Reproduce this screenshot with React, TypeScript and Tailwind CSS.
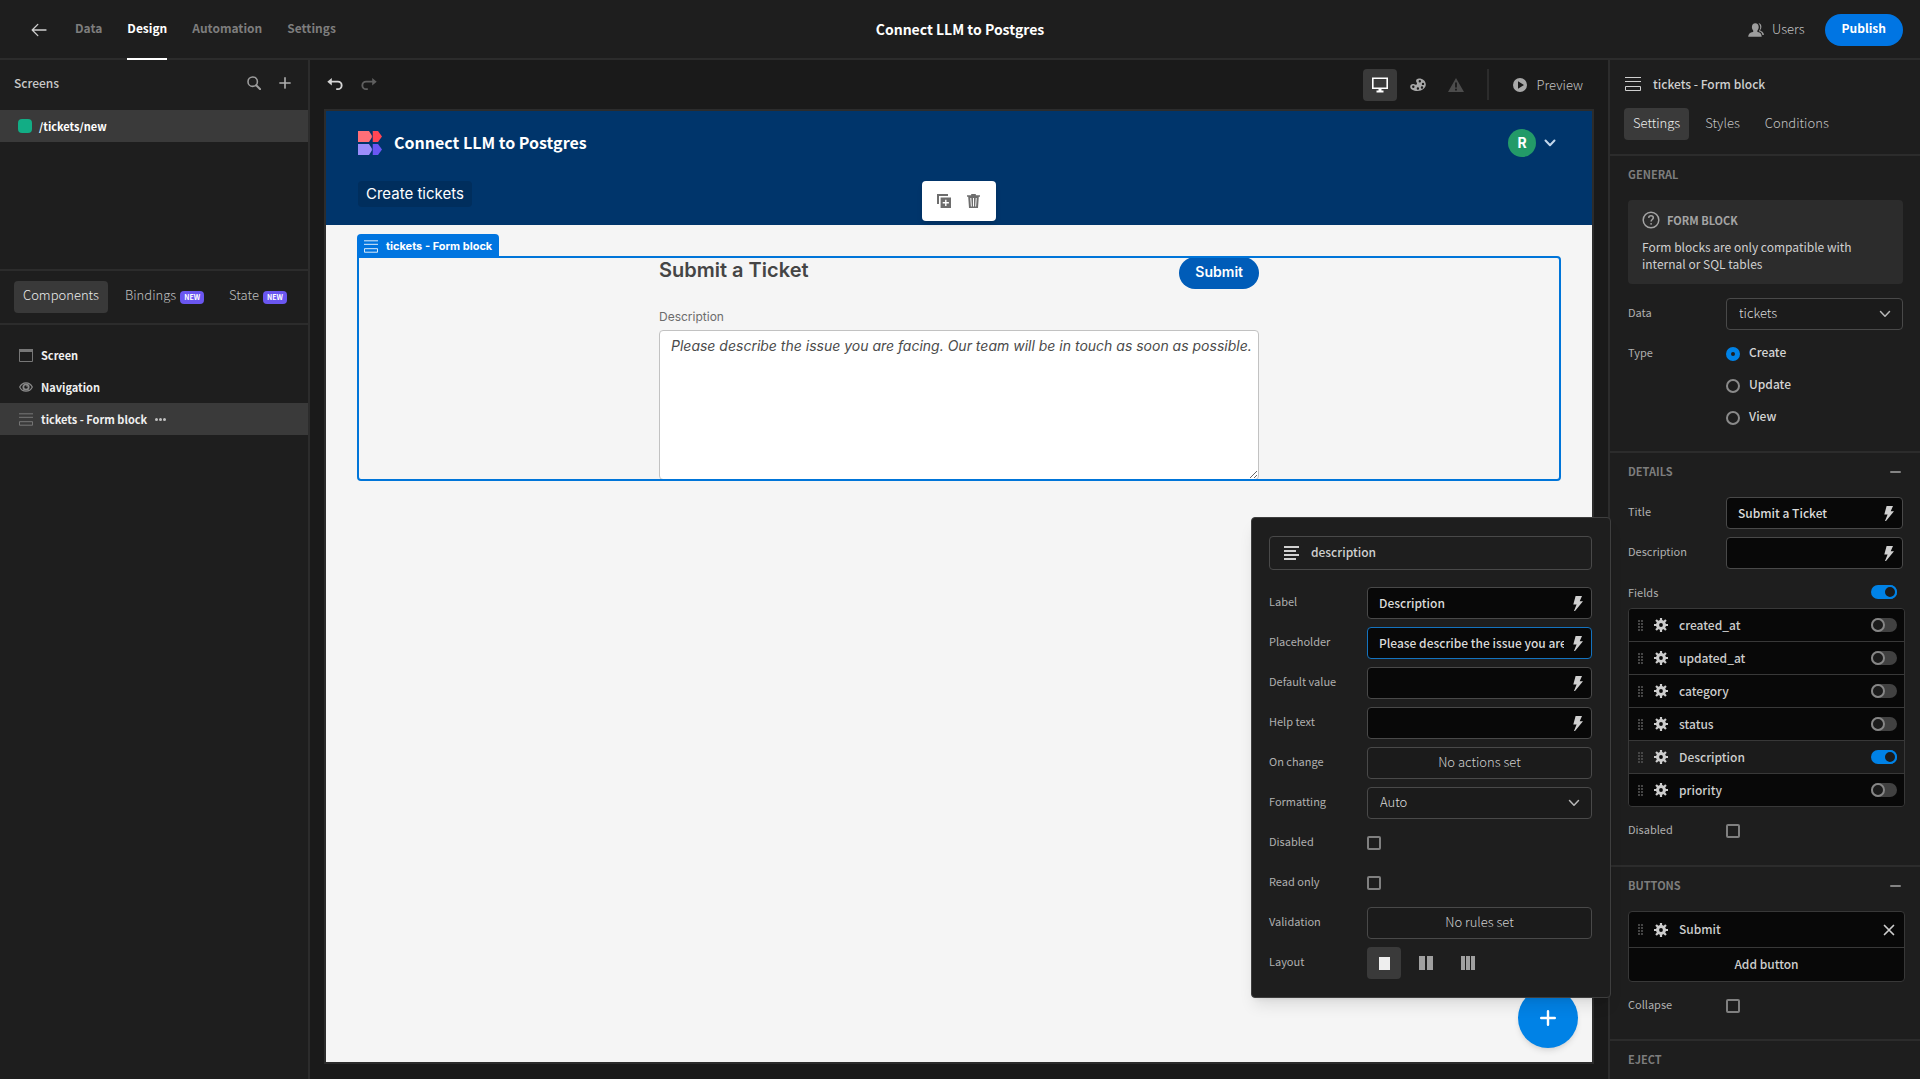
import React from "react";

type IconProps = { className?: string };

const BackIcon = ({ className }: IconProps) => (
  <svg viewBox="0 0 16 14" className={className} fill="none" stroke="currentColor" strokeWidth="1.3" strokeLinecap="round" strokeLinejoin="round">
    <path d="M15 7H1.200M6.800 1.400 1.200 7l5.600 5.600" />
  </svg>
);

const SearchIcon = ({ className }: IconProps) => (
  <svg viewBox="0 0 14 14" className={className} fill="none" stroke="currentColor" strokeWidth="1.6" strokeLinecap="round">
    <circle cx="5.7" cy="5.7" r="4.7" />
    <path d="m9.200 9.200 4 4" strokeWidth="2" />
  </svg>
);

const PlusIcon = ({ className }: IconProps) => (
  <svg viewBox="0 0 12 12" className={className} fill="none" stroke="currentColor" strokeLinecap="round">
    <path d="M6 .9v10.200M.9 6h10.200" />
  </svg>
);

const FormIcon = ({ className }: IconProps) => (
  <svg viewBox="0 0 16 14" className={className} fill="none" stroke="currentColor" strokeWidth="1">
    <path d="M0 .5h16M0 4.500h16" />
    <path d="M.5 9.500h15v4H.5z" />
  </svg>
);

const ScreenIcon = ({ className }: IconProps) => (
  <svg viewBox="0 0 14 13" className={className}>
    <path d="M.5.5h13v12H.5z" fill="none" stroke="currentColor" />
    <path d="M0 0h14v3H0z" fill="currentColor" />
  </svg>
);

const EyeIcon = ({ className }: IconProps) => (
  <svg viewBox="0 0 14 10" className={className} fill="none" stroke="currentColor">
    <path d="M.7 5C2 2.300 4.300.8 7 .8S12 2.300 13.300 5C12 7.700 9.700 9.200 7 9.200S2 7.700.7 5z" strokeWidth="1.200" />
    <circle cx="7" cy="5" r="2.700" strokeWidth="1.800" />
    <circle cx="8" cy="4" r=".8" fill="currentColor" stroke="none" />
  </svg>
);

const UndoIcon = ({ className }: IconProps) => (
  <svg viewBox="0 0 16 13" className={className}>
    <path d="M4.800 0v2.700h6.100a4.700 4.700 0 0 1 0 9.400H9.200v-1.900h1.700a2.800 2.800 0 0 0 0-5.600H4.800v3L.3 3.800z" fill="currentColor" />
  </svg>
);

const DesktopIcon = ({ className }: IconProps) => (
  <svg viewBox="0 0 16 16" className={className}>
    <path d="M.8 1.300h14.400v9.900H.8z" fill="none" stroke="currentColor" strokeWidth="1.600" />
    <path d="M6.500 11h3v2.500h2V15.500h-7v-2h2z" fill="currentColor" />
  </svg>
);

const PaletteIcon = ({ className }: IconProps) => (
  <svg viewBox="0 0 16 14" className={className}>
    <path
      fillRule="evenodd"
      fill="currentColor"
      d="M9 .6c3.900 0 6.800 2.600 6.800 6 0 3.600-3.700 6.400-8.200 6.400C3.300 13 .2 11.200.2 8.700c0-1.500 1.200-2.600 2.700-2.600 1.300 0 1.800.6 2.700.6.900 0 1.400-.5 1.400-1.300 0-.9-.9-1.300-.9-2.500C6.100 1.500 7.300.6 9 .6zM9.800 2a1.200 1.200 0 1 0 0 2.400 1.200 1.200 0 0 0 0-2.400zM13 4.700a1.200 1.200 0 1 0 0 2.400 1.200 1.200 0 0 0 0-2.400zM12 8.300a1.200 1.200 0 1 0 0 2.400 1.200 1.200 0 0 0 0-2.400zM7.900 9.300a1.200 1.200 0 1 0 0 2.400 1.200 1.200 0 0 0 0-2.400zM3.300 7.600a1.200 1.200 0 1 0 0 2.400 1.200 1.200 0 0 0 0-2.400z"
    />
  </svg>
);

const WarningIcon = ({ className }: IconProps) => (
  <svg viewBox="0 0 16 14" className={className}>
    <path fillRule="evenodd" fill="currentColor" d="M8 0l8 14H0zM7.100 4.500v5h1.800v-5zM7.100 10.700v1.700h1.800v-1.700z" />
  </svg>
);

const PlayIcon = ({ className }: IconProps) => (
  <svg viewBox="0 0 14 14" className={className}>
    <path fillRule="evenodd" fill="currentColor" d="M7 0a7 7 0 1 1 0 14A7 7 0 0 1 7 0zM5 3.200v7.600L11 7z" />
  </svg>
);

const UsersIcon = ({ className }: IconProps) => (
  <svg viewBox="0 0 16 14" className={className} fill="currentColor">
    <path d="M9.700 9c-.3-.1-.4-.4-.4-.8 0-.3.100-.6.300-.9.700-.8 1.100-2 1.100-3.200C10.700 1.700 9.400.3 7.300.3S3.900 1.700 3.900 4.100c0 1.200.4 2.400 1.100 3.200.2.300.3.600.3.900 0 .4-.1.700-.4.800C2 9.500.2 11 .2 13.700h13.500C13.700 11 12.400 9.500 9.700 9z" />
    <path d="M10.400.2c2 .2 3 1.600 3 3.600 0 1-.3 2-.9 2.700-.3.400-.3 1.200.2 1.500 2 .6 3.100 1.800 3.200 3.900h-1.500c-.4-1.900-1.500-3-3.500-3.600.9-1.300 1.300-2.700 1.300-4.100 0-1.800-.7-3.100-1.800-4z" />
  </svg>
);

const DuplicateIcon = ({ className }: IconProps) => (
  <svg viewBox="0 0 14 14" className={className}>
    <path d="M0 0h11v2H2v8H0z" fill="currentColor" />
    <path fillRule="evenodd" fill="currentColor" d="M3.600 3.600H14V14H3.600zM8.100 5.700v2.400H5.700v1.400h2.400v2.400h1.400V9.500h2.400V8.100H9.500V5.700z" />
  </svg>
);

const TrashIcon = ({ className }: IconProps) => (
  <svg viewBox="0 0 13 14" className={className}>
    <path fillRule="evenodd" fill="currentColor" d="M4.200 0h4.600v1.200H13v1.600h-1.200L11 14H2L1.200 2.800H0V1.200h4.200zM3.300 4l.6 8.500h.9L4.300 4zM6 4v8.500h1V4zM8.700 4l-.5 8.500h.9L9.700 4z" />
  </svg>
);

const BoltIcon = ({ className }: IconProps) => (
  <svg viewBox="0 0 10 15" className={className}>
    <path d="M2.600 0H9L6.700 5.200H10L2 15H1l2.600-6.500H.3z" fill="currentColor" />
  </svg>
);

const ChevronIcon = ({ className }: IconProps) => (
  <svg viewBox="0 0 12 8" className={className} fill="none" stroke="currentColor" strokeLinecap="round" strokeLinejoin="round">
    <path d="m1.500 1.500 4.500 4.700 4.500-4.700" />
  </svg>
);

const GearIcon = ({ className }: IconProps) => (
  <svg viewBox="0 0 14 14" className={className}>
    <g fill="currentColor">
      <path d="M5.900 0h2.200v14H5.900z" />
      <path d="M5.900 0h2.200v14H5.900z" transform="rotate(45 7 7)" />
      <path d="M5.900 0h2.200v14H5.900z" transform="rotate(90 7 7)" />
      <path d="M5.900 0h2.200v14H5.900z" transform="rotate(135 7 7)" />
      <circle cx="7" cy="7" r="5" />
    </g>
    <circle cx="7" cy="7" r="1.900" fill="#0a0a0a" />
  </svg>
);

const DragIcon = ({ className }: IconProps) => (
  <svg viewBox="0 0 5 11" className={className} fill="currentColor">
    {[0, 3, 6, 9].map((y) => (
      <React.Fragment key={y}>
        <rect x="0" y={y} width="2" height="2" />
        <rect x="3" y={y} width="2" height="2" />
      </React.Fragment>
    ))}
  </svg>
);

const CloseIcon = ({ className }: IconProps) => (
  <svg viewBox="0 0 12 12" className={className} fill="none" stroke="currentColor" strokeWidth="1.700" strokeLinecap="round">
    <path d="m1.500 1.500 9 9M10.500 1.500l-9 9" />
  </svg>
);

const TextAlignIcon = ({ className }: IconProps) => (
  <svg viewBox="0 0 15 14" className={className} fill="currentColor">
    <path d="M0 0h15v2H0zM0 4h12v2H0zM0 8h15v2H0zM0 12h12v2H0z" />
  </svg>
);

const HelpIcon = ({ className }: IconProps) => (
  <svg viewBox="0 0 18 18" className={className} fill="none" stroke="currentColor" strokeWidth="1.500">
    <circle cx="9" cy="9" r="7.800" />
    <path d="M6.700 6.900C6.800 5.500 7.700 4.800 9 4.800s2.300.8 2.300 2c0 1.700-2.200 1.800-2.200 3.700" />
    <circle cx="9.100" cy="12.800" r=".9" fill="currentColor" stroke="none" />
  </svg>
);

const Logo = ({ className }: IconProps) => (
  <svg viewBox="0 0 24 24" className={className}>
    <path d="M0 0h11l3.500 5.500L11 11H0z" fill="#ff6f78" />
    <path d="M14.500 0H20l4 5.500-4 5.500h-5.500z" fill="#ff4654" />
    <path d="M0 13h11l3.500 5.500L11 24H0z" fill="#9b8dfb" />
    <path d="M14.500 13H20l4 5.500-4 5.500h-5.500z" fill="#6a56f3" />
    <path d="M14.300 0v11M14.300 13v11" stroke="#00356b" strokeWidth=".6" />
  </svg>
);

function NewBadge() {
  return <span className="rounded-sm bg-[#6a56f0] px-1 text-[7px] leading-[13px] font-bold text-white">NEW</span>;
}

function BoundInput({ id, value, focused }: { id: string; value: string; focused?: boolean }) {
  return (
    <div className={`flex h-8 min-w-0 flex-1 items-center rounded border bg-[#080808] ${focused ? "border-[#1473bf]" : "border-[#494949]"}`}>
      <input id={id} type="text" defaultValue={value} className="h-full min-w-0 flex-1 bg-transparent pb-0.5 pl-[11px] text-xs leading-4 font-medium text-[#dadada] outline-none" />
      <button type="button" aria-label="Bind value" className="flex w-[27px] shrink-0 justify-center text-[#d0d0d0]">
        <BoltIcon className="h-[15px] w-[10px]" />
      </button>
    </div>
  );
}

function Picker({ id, value }: { id: string; value: string }) {
  return (
    <div className="relative h-8 min-w-0 flex-1">
      <select id={id} defaultValue={value} className="h-full w-full appearance-none rounded border border-[#494949] bg-[#1b1b1b] pb-0.5 pl-3 text-[13px] leading-4 font-light text-[#dcdcdc] outline-none">
        <option>{value}</option>
      </select>
      <ChevronIcon className="pointer-events-none absolute top-3 right-3 h-2 w-3 stroke-[1.5] text-[#b8b8b8]" />
    </div>
  );
}

function Checkbox({ id }: { id: string }) {
  return <input id={id} type="checkbox" className="h-[14px] w-[14px] shrink-0 appearance-none rounded-[2px] border-2 border-[#808080] bg-transparent checked:bg-[#0082e6]" />;
}

function Switch({ label, on }: { label: string; on?: boolean }) {
  return (
    <label className="relative block h-[14px] w-[26px] shrink-0">
      <input type="checkbox" role="switch" aria-label={label} defaultChecked={on} className="peer absolute inset-0 h-full w-full appearance-none rounded-full bg-[#414141] checked:bg-[#0082e6]" />
      <span className="pointer-events-none absolute top-0 left-0 h-[14px] w-[14px] rounded-full border-2 border-[#868686] bg-[#1b1b1b] peer-checked:left-3 peer-checked:border-[#0082e6]" />
    </label>
  );
}

function Row({ label, htmlFor, children }: { label: string; htmlFor?: string; children: React.ReactNode }) {
  return (
    <div className="flex min-h-8 items-center">
      <label htmlFor={htmlFor} className="w-[98px] shrink-0 pb-1 text-[11px] leading-4 text-[#b0b0b0]">
        {label}
      </label>
      {children}
    </div>
  );
}

function SectionHeader({ title, collapsible }: { title: string; collapsible?: boolean }) {
  return (
    <div className="flex h-[38px] items-center justify-between pr-1">
      <h2 className="pb-0.5 text-[11px] leading-4 font-bold text-[#7d7d7d]">{title}</h2>
      {collapsible && (
        <button type="button" aria-label={`Collapse ${title}`} className="flex h-4 w-[11px] items-center">
          <span className="h-[2px] w-full rounded-full bg-[#848484]" />
        </button>
      )}
    </div>
  );
}

function TopBar() {
  const tabs = ["Data", "Design", "Automation", "Settings"];
  return (
    <header className="grid h-[60px] shrink-0 grid-cols-[1fr_auto_1fr] border-b-2 border-[#2c2c2c] bg-[#1e1e1e]">
      <div className="flex items-center pl-[31px]">
        <button type="button" aria-label="Back" className="mr-7 text-[#cfcfcf]">
          <BackIcon className="h-[14px] w-4" />
        </button>
        <nav className="flex h-[60px] gap-[25px] self-start">
          {tabs.map((t) => (
            <a key={t} href="#" className={`flex h-[60px] items-center border-b-2 pb-0.5 text-xs leading-4 font-bold ${t === "Design" ? "border-white text-white" : "border-transparent text-[#7d7d7d]"}`}>
              {t}
            </a>
          ))}
        </nav>
      </div>
      <h1 className="self-center pb-0.5 text-sm leading-5 font-bold text-white">Connect LLM to Postgres</h1>
      <div className="flex items-center justify-end pr-[17px]">
        <button type="button" className="mr-5 flex items-center gap-2 text-[13px] leading-4 font-light text-[#c4c4c4]">
          <UsersIcon className="h-[14px] w-4 text-[#9d9d9d]" />
          <span className="pb-0.5">Users</span>
        </button>
        <button type="button" className="h-8 rounded-full bg-[#0075e3] px-[17px] pb-1 text-xs leading-4 font-bold text-white">
          Publish
        </button>
      </div>
    </header>
  );
}

function LeftPanel() {
  return (
    <aside className="flex w-[310px] shrink-0 flex-col border-r-2 border-[#2c2c2c] bg-[#1e1e1e]">
      <section className="h-[211px] border-b-2 border-[#2c2c2c]">
        <div className="flex h-[50px] items-center pr-[17px] pl-[14px]">
          <h2 className="flex-1 pb-1 text-xs leading-4 font-medium text-[#c8c8c8]">Screens</h2>
          <button type="button" aria-label="Search screens" className="mr-[18px] pb-1 text-[#9c9c9c]">
            <SearchIcon className="h-[14px] w-[14px]" />
          </button>
          <button type="button" aria-label="Add screen" className="pb-1 text-[#b0b0b0]">
            <PlusIcon className="h-3 w-3 stroke-[1.6]" />
          </button>
        </div>
        <a href="#" className="flex h-8 items-center gap-[7px] bg-[#3a3a3a] pl-[18px] text-[11px] leading-4 font-bold text-white">
          <span className="h-[14px] w-[14px] rounded-[4px] bg-[#12ad85]" />
          /tickets/new
        </a>
      </section>
      <div className="flex h-[54px] items-center border-b-2 border-[#2c2c2c] pl-[14px] text-[13px] leading-4 font-light text-[#c0c0c0]">
        <button type="button" className="mr-[17px] h-8 rounded bg-[#393939] px-[9px] pb-1 text-[#ececec]">Components</button>
        <button type="button" className="mr-[25px] flex h-8 items-center gap-1">
          <span className="pb-1">Bindings</span> <NewBadge />
        </button>
        <button type="button" className="flex h-8 items-center gap-1">
          <span className="pb-1">State</span> <NewBadge />
        </button>
      </div>
      <ul className="pt-[14px] text-[11px] leading-4 font-bold text-[#f0f0f0]">
        <li className="flex h-8 items-center gap-2 pl-[19px]">
          <ScreenIcon className="h-[13px] w-[14px] text-[#777]" />
          Screen
        </li>
        <li className="flex h-8 items-center gap-2 pl-[19px]">
          <EyeIcon className="h-[10px] w-[14px] text-[#8a8a8a]" />
          Navigation
        </li>
        <li className="flex h-8 items-center gap-2 bg-[#3a3a3a] pl-[19px]">
          <FormIcon className="h-[13px] w-[14px] text-[#808080]" />
          tickets - Form block
          <button type="button" aria-label="More" className="flex gap-px">
            <span className="h-[3px] w-[3px] rounded-full bg-[#c0c0c0]" />
            <span className="h-[3px] w-[3px] rounded-full bg-[#c0c0c0]" />
            <span className="h-[3px] w-[3px] rounded-full bg-[#c0c0c0]" />
          </button>
        </li>
      </ul>
    </aside>
  );
}

function Toolbar() {
  return (
    <div className="flex h-[49px] shrink-0 items-center pr-[11px] pl-[3px]">
      <button type="button" aria-label="Undo" className="text-[#d4d4d4]">
        <UndoIcon className="h-[13px] w-4" />
      </button>
      <button type="button" aria-label="Redo" className="ml-[18px] -scale-x-100 text-[#5f5f5f]">
        <UndoIcon className="h-[13px] w-4" />
      </button>
      <div className="ml-auto flex h-8 items-center">
        <button type="button" aria-label="Desktop" className="flex h-8 w-[34px] items-center justify-center rounded bg-[#3a3a3a] text-white">
          <DesktopIcon className="h-4 w-4" />
        </button>
        <button type="button" aria-label="Theme" className="ml-[13px] text-[#a8a8a8]">
          <PaletteIcon className="h-[14px] w-4" />
        </button>
        <button type="button" aria-label="Errors" className="ml-[22px] text-[#4c4c4c]">
          <WarningIcon className="h-[14px] w-4" />
        </button>
        <span className="mr-6 ml-[23px] h-[31px] w-[2px] bg-[#2c2c2c]" />
        <button type="button" className="flex items-center gap-[10px] text-[13px] leading-4 font-light text-[#c4c4c4]">
          <PlayIcon className="h-[14px] w-[14px] text-[#a8a8a8]" />
          Preview
        </button>
      </div>
    </div>
  );
}

function Canvas() {
  return (
    <div className="relative min-h-0 flex-1 border-2 border-[#2c2c2c] bg-[#f5f5f5] font-['Inter',sans-serif]">
      <header className="h-[114px] bg-[#00356b] px-8 pt-[18px] text-white">
        <div className="flex items-center">
          <Logo className="h-6 w-6" />
          <h2 className="ml-3 flex-1 pb-0.5 text-base leading-6 font-bold [font-family:'Noto_Sans_CJK_SC',sans-serif]">Connect LLM to Postgres</h2>
          <button type="button" aria-label="Account" className="flex items-center gap-2 pr-1">
            <span className="h-7 w-7 rounded-full bg-[#239a68] text-sm leading-7 font-bold">R</span>
            <ChevronIcon className="h-2 w-3 stroke-2 text-[#c3d7ec]" />
          </button>
        </div>
        <a href="#" className="mt-6 inline-block rounded bg-[#002e5d] px-2 text-[15px] leading-[26px]">
          Create tickets
        </a>
      </header>
      <div className="absolute top-[70px] left-1/2 flex h-10 w-[74px] -translate-x-1/2 items-center gap-4 rounded bg-white pl-[15px] text-[#6d6d6d] shadow-md">
        <button type="button" aria-label="Duplicate">
          <DuplicateIcon className="h-[14px] w-[14px]" />
        </button>
        <button type="button" aria-label="Delete">
          <TrashIcon className="h-[14px] w-[13px]" />
        </button>
      </div>
      <div className="relative mx-[31px] mt-[31px] h-[225px] pt-px">
        <form className="mx-auto max-w-[600px]">
          <div className="flex items-start justify-between">
            <h3 className="pt-px text-xl leading-6 font-semibold text-[#454545]">Submit a Ticket</h3>
            <button type="button" className="h-8 rounded-full bg-[#005cb8] px-4 pb-0.5 text-sm leading-5 font-semibold text-white">
              Submit
            </button>
          </div>
          <label htmlFor="ticket-description" className="mt-5 block text-xs leading-4 text-[#6c6c6c]">
            Description
          </label>
          <textarea
            id="ticket-description"
            placeholder="Please describe the issue you are facing. Our team will be in touch as soon as possible."
            className="mt-[5px] block h-[150px] w-full rounded border border-[#c2c2c2] bg-white py-[5px] pr-1 pl-[11px] text-sm leading-5 text-[#4b4b4b] italic placeholder:text-[#4b4b4b]"
          />
        </form>
        <div className="pointer-events-none absolute inset-0 rounded-b rounded-tr border-2 border-[#0075d9]" />
        <div className="absolute -top-[22px] left-0 flex h-6 items-center gap-2 rounded-t bg-[#0075e0] px-[7px] text-[11px] leading-4 font-bold text-white">
          <FormIcon className="h-[13px] w-[14px]" />
          tickets - Form block
        </div>
      </div>
      <button type="button" aria-label="Add component" className="absolute right-[14px] bottom-[14px] flex h-[60px] w-[60px] items-center justify-center rounded-full bg-[#0082e6] text-white shadow-md">
        <PlusIcon className="h-4 w-4 stroke-[1.8]" />
      </button>
    </div>
  );
}

function FieldPopover() {
  const boxButton = "h-8 min-w-0 flex-1 rounded border border-[#494949] bg-[#1b1b1b] pb-0.5 text-center text-[13px] leading-4 font-light text-[#d0d0d0]";
  return (
    <div role="dialog" aria-label="description" className="absolute top-[457px] -right-[3px] w-[360px] rounded border border-[#3e3e3e] bg-[#1e1e1e] py-[18px] pr-[18px] pl-[17px] shadow-lg">
      <div className="mb-[17px] flex h-[34px] items-center gap-3 rounded border border-[#494949] pl-[14px] text-xs leading-4 font-medium text-[#d0d0d0]">
        <TextAlignIcon className="h-[14px] w-[15px]" />
        <span className="pb-0.5">description</span>
      </div>
      <div className="flex flex-col gap-2">
        <Row label="Label" htmlFor="f-label"><BoundInput id="f-label" value="Description" /></Row>
        <Row label="Placeholder" htmlFor="f-ph">
          <BoundInput id="f-ph" value="Please describe the issue you are facing. Our team will be in touch as soon as possible." focused />
        </Row>
        <Row label="Default value" htmlFor="f-def"><BoundInput id="f-def" value="" /></Row>
        <Row label="Help text" htmlFor="f-help"><BoundInput id="f-help" value="" /></Row>
        <Row label="On change" htmlFor="f-change"><button id="f-change" type="button" className={boxButton}>No actions set</button></Row>
        <Row label="Formatting" htmlFor="f-fmt"><Picker id="f-fmt" value="Auto" /></Row>
        <Row label="Disabled" htmlFor="f-dis"><Checkbox id="f-dis" /></Row>
        <Row label="Read only" htmlFor="f-ro"><Checkbox id="f-ro" /></Row>
        <Row label="Validation" htmlFor="f-val"><button id="f-val" type="button" className={boxButton}>No rules set</button></Row>
        <Row label="Layout">
          <div className="flex gap-2">
            <button type="button" aria-label="One column" className="flex h-8 w-[34px] items-center justify-center rounded bg-[#3a3a3a]">
              <span className="h-[13px] w-[11px] bg-[#eeeeee]" />
            </button>
            <button type="button" aria-label="Two columns" className="flex h-8 w-[34px] items-center justify-center gap-[2px]">
              <span className="h-[14px] w-[6px] bg-[#a0a0a0]" />
              <span className="h-[14px] w-[6px] bg-[#a0a0a0]" />
            </button>
            <button type="button" aria-label="Three columns" className="flex h-8 w-[34px] items-center justify-center gap-px">
              <span className="h-[14px] w-1 bg-[#a0a0a0]" />
              <span className="h-[14px] w-1 bg-[#a0a0a0]" />
              <span className="h-[14px] w-1 bg-[#a0a0a0]" />
            </button>
          </div>
        </Row>
      </div>
    </div>
  );
}

const fields = [
  { name: "created_at", on: false },
  { name: "updated_at", on: false },
  { name: "category", on: false },
  { name: "status", on: false },
  { name: "Description", on: true },
  { name: "priority", on: false },
];

function RightPanel() {
  return (
    <aside className="w-[312px] shrink-0 overflow-hidden border-l-2 border-[#2c2c2c] bg-[#1e1e1e]">
      <div className="h-24 border-b-2 border-[#2c2c2c] pt-2 pl-[14px]">
        <div className="flex h-8 items-center gap-3 pl-px text-xs leading-4 font-medium text-[#cfcfcf]">
          <FormIcon className="h-[14px] w-4" />
          tickets - Form block
        </div>
        <div className="mt-2 flex text-[13px] leading-4 font-light text-[#c4c4c4]">
          <button type="button" className="h-8 rounded bg-[#3a3a3a] px-[9px] pb-0.5 text-[#efefef]">Settings</button>
          <button type="button" className="ml-[7px] h-8 px-[9px] pb-0.5">Styles</button>
          <button type="button" className="ml-[7px] h-8 px-[9px] pb-0.5">Conditions</button>
        </div>
      </div>
      <section className="border-b-2 border-[#2c2c2c] pr-[17px] pb-[17px] pl-[18px]">
        <SectionHeader title="GENERAL" />
        <div className="mt-[6px] mb-[14px] h-[84px] rounded bg-[#2c2c2c] pt-[11px] pr-6 pl-[14px]">
          <div className="flex items-center gap-[7px] text-[11px] leading-[18px] font-bold text-[#a4a4a4]">
            <HelpIcon className="h-[18px] w-[18px]" />
            FORM BLOCK
          </div>
          <p className="mt-[9px] text-xs leading-[17px] text-[#d0d0d0]">Form blocks are only compatible with internal or SQL tables</p>
        </div>
        <Row label="Data" htmlFor="s-data"><Picker id="s-data" value="tickets" /></Row>
        <fieldset className="mt-2 flex">
          <legend className="float-left h-8 w-[98px] text-[11px] leading-7 text-[#b0b0b0]">Type</legend>
          <div>
            {["Create", "Update", "View"].map((t) => (
              <label key={t} className="flex h-8 items-center gap-[9px] text-xs leading-4 font-medium text-[#d4d4d4]">
                <input type="radio" name="type" defaultChecked={t === "Create"} className="h-[14px] w-[14px] appearance-none rounded-full border-2 border-[#8a8a8a] checked:border-[5px] checked:border-[#0082e6]" />
                <span className="pb-1">{t}</span>
              </label>
            ))}
          </div>
        </fieldset>
      </section>
      <section className="border-b-2 border-[#2c2c2c] pr-[15px] pb-[18px] pl-[18px]">
        <SectionHeader title="DETAILS" collapsible />
        <div className="mt-[6px] flex flex-col gap-2 pr-0.5">
          <Row label="Title" htmlFor="s-title"><BoundInput id="s-title" value="Submit a Ticket" /></Row>
          <Row label="Description" htmlFor="s-desc"><BoundInput id="s-desc" value="" /></Row>
        </div>
        <div className="mt-2 flex h-[31px] items-center justify-between pr-2 pb-px text-[11px] leading-4 text-[#b0b0b0]">
          <span>Fields</span>
          <Switch label="All fields" on />
        </div>
        <ul className="mb-2 overflow-hidden rounded border border-[#383838]">
          {fields.map((f) => (
            <li key={f.name} className={`flex h-[33px] items-center border-b border-[#383838] pr-[7px] pl-[9px] last:h-8 last:border-b-0 ${f.on ? "bg-[#1b1b1b]" : "bg-[#080808]"}`}>
              <DragIcon className="h-[11px] w-[5px] text-[#454545]" />
              <button type="button" aria-label={`Configure ${f.name}`} className="ml-[11px] text-[#cdcdcd]">
                <GearIcon className="h-[14px] w-[14px]" />
              </button>
              <span className="ml-[11px] flex-1 text-xs leading-4 font-medium text-[#cdcdcd]">{f.name}</span>
              <Switch label={f.name} on={f.on} />
            </li>
          ))}
        </ul>
        <Row label="Disabled" htmlFor="s-dis"><Checkbox id="s-dis" /></Row>
      </section>
      <section className="border-b-2 border-[#2c2c2c] pr-[15px] pb-[17px] pl-[18px]">
        <SectionHeader title="BUTTONS" collapsible />
        <div className="mt-[6px] mb-2 overflow-hidden rounded border border-[#383838] bg-[#080808] text-xs leading-4 font-medium text-[#cdcdcd]">
          <div className="flex h-[35px] items-center pr-[9px] pl-[9px]">
            <DragIcon className="h-[11px] w-[5px] text-[#454545]" />
            <button type="button" aria-label="Configure Submit" className="ml-[11px]">
              <GearIcon className="h-[14px] w-[14px]" />
            </button>
            <span className="ml-[11px] flex-1 pb-0.5">Submit</span>
            <button type="button" aria-label="Remove Submit">
              <CloseIcon className="h-3 w-3" />
            </button>
          </div>
          <button type="button" className="h-[34px] w-full border-t border-[#383838] pb-0.5">Add button</button>
        </div>
        <Row label="Collapse" htmlFor="s-col"><Checkbox id="s-col" /></Row>
      </section>
      <section className="pl-[18px]">
        <SectionHeader title="EJECT" />
      </section>
    </aside>
  );
}

export default function App() {
  return (
    <div className="flex h-screen flex-col overflow-hidden bg-[#1e1e1e] [font-family:'Noto_Sans_CJK_SC',sans-serif]">
      <TopBar />
      <div className="flex min-h-0 flex-1">
        <LeftPanel />
        <main className="relative z-10 flex min-w-0 flex-1 flex-col bg-[#1a1a1a] px-[14px] pb-[15px]">
          <Toolbar />
          <Canvas />
          <FieldPopover />
        </main>
        <RightPanel />
      </div>
    </div>
  );
}
